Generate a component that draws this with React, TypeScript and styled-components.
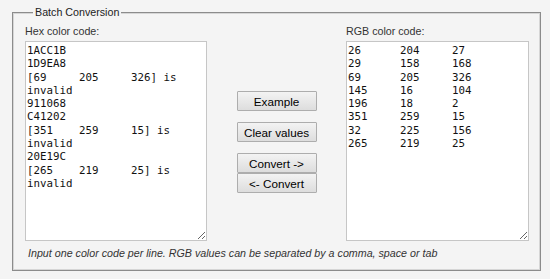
import React from "react";
import styled, { createGlobalStyle } from "styled-components";

const GlobalStyle = createGlobalStyle`
  html, body {
    margin: 0;
    padding: 0;
    background: #f4f4f4;
  }
  body {
    font-family: "Liberation Sans", Arial, sans-serif;
  }
`;

const Page = styled.div`
  width: 550px;
  height: 279px;
  padding-top: 5px;
  box-sizing: border-box;
`;

const Fieldset = styled.fieldset`
  margin: 0 0 0 12px;
  width: 529px;
  box-sizing: border-box;
  padding: 5px 11px 10px 12px;
  border: 1px solid #8c8c8c;
  box-shadow: inset 0 0 0 1px #d6d6d6;
  min-inline-size: 0;
`;

const Legend = styled.legend`
  margin-left: 8px;
  padding: 0 2px;
  background: #f4f4f4;
  font-size: 10.7px;
  line-height: 14px;
  color: #222;
`;

const Columns = styled.div`
  display: grid;
  grid-template-columns: 182px 139px 183px;
`;

const Column = styled.div`
  display: flex;
  flex-direction: column;
`;

const Label = styled.label`
  font-size: 10.7px;
  line-height: 14px;
  color: #333;
  margin-bottom: 3px;
`;

const CodeArea = styled.textarea`
  box-sizing: border-box;
  width: 100%;
  height: 200px;
  margin: 0;
  padding: 2px 1px 1px 1px;
  border: 1px solid #c6c6c6;
  background: #fff;
  color: #111;
  font-family: "DejaVu Sans Mono", monospace;
  font-size: 10.8px;
  line-height: 13.3px;
  tab-size: 8;
  outline: none;
`;

const ButtonStack = styled.div`
  display: flex;
  flex-direction: column;
  align-items: center;
  padding-top: 67px;
`;

const Button = styled.button<{ $gap: number }>`
  width: 80px;
  height: 20px;
  margin: 0 0 ${(p) => p.$gap}px 0;
  padding: 0;
  border: 1px solid #adadad;
  border-radius: 1px;
  background: linear-gradient(#f3f3f3, #dddddd);
  color: #000;
  font-family: "Liberation Sans", Arial, sans-serif;
  font-size: 11.7px;
  cursor: pointer;
`;

const Hint = styled.div`
  margin-top: 5px;
  padding-left: 3px;
  font-size: 10.7px;
  line-height: 14px;
  font-style: italic;
  color: #333;
`;

const hexText = [
  "1ACC1B",
  "1D9EA8",
  "[69\t205\t326] is invalid",
  "911068",
  "C41202",
  "[351\t259\t15] is invalid",
  "20E19C",
  "[265\t219\t25] is invalid",
].join("\n");

const rgbText = [
  "26\t204\t27",
  "29\t158\t168",
  "69\t205\t326",
  "145\t16\t104",
  "196\t18\t2",
  "351\t259\t15",
  "32\t225\t156",
  "265\t219\t25",
].join("\n");

const buttons = [
  { label: "Example", gap: 11 },
  { label: "Clear values", gap: 11 },
  { label: "Convert ->", gap: 0 },
  { label: "<- Convert", gap: 0 },
];

export default function App() {
  return (
    <Page>
      <GlobalStyle />
      <Fieldset>
        <Legend>Batch Conversion</Legend>
        <Columns>
          <Column>
            <Label>Hex color code:</Label>
            <CodeArea defaultValue={hexText} spellCheck={false} />
          </Column>
          <ButtonStack>
            {buttons.map((b) => (
              <Button key={b.label} $gap={b.gap}>
                {b.label}
              </Button>
            ))}
          </ButtonStack>
          <Column>
            <Label>RGB color code:</Label>
            <CodeArea defaultValue={rgbText} spellCheck={false} />
          </Column>
        </Columns>
        <Hint>Input one color code per line. RGB values can be separated by a comma, space or tab</Hint>
      </Fieldset>
    </Page>
  );
}
